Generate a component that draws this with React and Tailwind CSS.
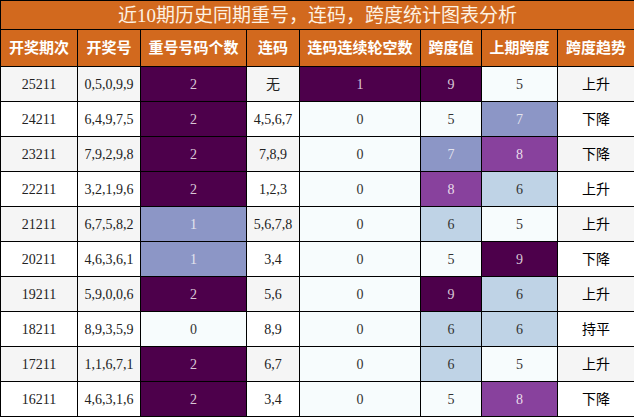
const rows = [
  ["25211", "0,5,0,9,9", 2, "无", 1, 9, 5, "上升"],
  ["24211", "6,4,9,7,5", 2, "4,5,6,7", 0, 5, 7, "下降"],
  ["23211", "7,9,2,9,8", 2, "7,8,9", 0, 7, 8, "下降"],
  ["22211", "3,2,1,9,6", 2, "1,2,3", 0, 8, 6, "上升"],
  ["21211", "6,7,5,8,2", 1, "5,6,7,8", 0, 6, 5, "上升"],
  ["20211", "4,6,3,6,1", 1, "3,4", 0, 5, 9, "下降"],
  ["19211", "5,9,0,0,6", 2, "5,6", 0, 9, 6, "上升"],
  ["18211", "8,9,3,5,9", 0, "8,9", 0, 6, 6, "持平"],
  ["17211", "1,1,6,7,1", 2, "6,7", 0, 6, 5, "上升"],
  ["16211", "4,6,3,1,6", 2, "3,4", 0, 5, 8, "下降"],
];

const headers = ["开奖期次", "开奖号", "重号号码个数", "连码", "连码连续轮空数", "跨度值", "上期跨度", "跨度趋势"];

// palette shades, light to dark
const shade = {
  0: "bg-[#f7fcfd] text-[#333]",
  1: "bg-[#bfd3e6] text-[#333]",
  2: "bg-[#8c96c6] text-[#e4e4ee]",
  3: "bg-[#88419d] text-[#e8dcea]",
  4: "bg-[#4d004b] text-[#d8c8d6]",
};

const repeatShade = (n) => shade[n === 0 ? 0 : n === 1 ? 2 : 4];
const gapShade = (n) => shade[n === 0 ? 0 : 4];
const spanShade = (n) => shade[n <= 5 ? 0 : n === 6 ? 1 : n === 7 ? 2 : n === 8 ? 3 : 4];

const td = "border border-black text-center p-0";

export default function App() {
  return (
    <div className="w-[634px] bg-white" style={{ fontFamily: '"Liberation Serif", "Noto Sans CJK SC", serif' }}>
      <table className="w-full table-fixed border-collapse">
        <colgroup>
          <col className="w-[77px]" />
          <col className="w-[63px]" />
          <col className="w-[106px]" />
          <col className="w-[53px]" />
          <col className="w-[121px]" />
          <col className="w-[61px]" />
          <col className="w-[76px]" />
          <col className="w-[77px]" />
        </colgroup>
        <thead>
          <tr className="h-[29px]">
            <th colSpan={8} className={`${td} bg-[#d2691e] text-[19px] font-normal text-[#fdf1e2] leading-none`}>
              近10期历史同期重号，连码，跨度统计图表分析
            </th>
          </tr>
          <tr className="h-[37px]">
            {headers.map((h) => (
              <th key={h} className={`${td} bg-[#d2691e] text-[15px] font-bold text-white leading-none`}>
                {h}
              </th>
            ))}
          </tr>
        </thead>
        <tbody>
          {rows.map((r, i) => {
            const stripe = i % 2 === 0 ? "bg-[#f5f5f5]" : "bg-white";
            return (
              <tr key={r[0]} className="h-[35px] text-[14px] text-[#222]">
                <td className={`${td} ${stripe}`}>{r[0]}</td>
                <td className={`${td} ${stripe}`}>{r[1]}</td>
                <td className={`${td} ${repeatShade(r[2])}`}>{r[2]}</td>
                <td className={`${td} ${stripe}`}>{r[3]}</td>
                <td className={`${td} ${gapShade(r[4])}`}>{r[4]}</td>
                <td className={`${td} ${spanShade(r[5])}`}>{r[5]}</td>
                <td className={`${td} ${spanShade(r[6])}`}>{r[6]}</td>
                <td className={`${td} ${stripe} text-black`}>{r[7]}</td>
              </tr>
            );
          })}
        </tbody>
      </table>
    </div>
  );
}
